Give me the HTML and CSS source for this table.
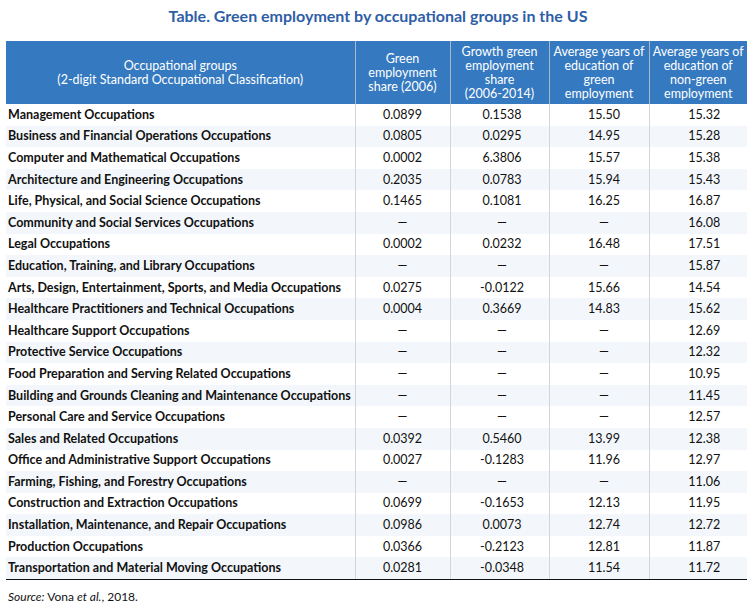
FILE: index.html
```html
<!DOCTYPE html>
<html>
<head>
<meta charset="utf-8">
<link rel="stylesheet" href="styles.css">
</head>
<body>
<div class="page">
  <h1 class="title">Table. Green employment by occupational groups in the US</h1>
  <table class="tbl">
    <colgroup>
      <col class="c1"><col class="c2"><col class="c3"><col class="c4"><col class="c5">
    </colgroup>
    <thead>
      <tr>
        <th>Occupational groups<br>(2-digit Standard Occupational Classification)</th>
        <th>Green<br>employment<br>share (2006)</th>
        <th>Growth green<br>employment<br>share<br>(2006-2014)</th>
        <th>Average years of<br>education of<br>green<br>employment</th>
        <th>Average years of<br>education of<br>non-green<br>employment</th>
      </tr>
    </thead>
    <tbody>
      <tr><td>Management Occupations</td><td>0.0899</td><td>0.1538</td><td>15.50</td><td>15.32</td></tr>
      <tr><td>Business and Financial Operations Occupations</td><td>0.0805</td><td>0.0295</td><td>14.95</td><td>15.28</td></tr>
      <tr><td>Computer and Mathematical Occupations</td><td>0.0002</td><td>6.3806</td><td>15.57</td><td>15.38</td></tr>
      <tr><td>Architecture and Engineering Occupations</td><td>0.2035</td><td>0.0783</td><td>15.94</td><td>15.43</td></tr>
      <tr><td>Life, Physical, and Social Science Occupations</td><td>0.1465</td><td>0.1081</td><td>16.25</td><td>16.87</td></tr>
      <tr><td>Community and Social Services Occupations</td><td>—</td><td>—</td><td>—</td><td>16.08</td></tr>
      <tr><td>Legal Occupations</td><td>0.0002</td><td>0.0232</td><td>16.48</td><td>17.51</td></tr>
      <tr><td>Education, Training, and Library Occupations</td><td>—</td><td>—</td><td>—</td><td>15.87</td></tr>
      <tr><td>Arts, Design, Entertainment, Sports, and Media Occupations</td><td>0.0275</td><td>-0.0122</td><td>15.66</td><td>14.54</td></tr>
      <tr><td>Healthcare Practitioners and Technical Occupations</td><td>0.0004</td><td>0.3669</td><td>14.83</td><td>15.62</td></tr>
      <tr><td>Healthcare Support Occupations</td><td>—</td><td>—</td><td>—</td><td>12.69</td></tr>
      <tr><td>Protective Service Occupations</td><td>—</td><td>—</td><td>—</td><td>12.32</td></tr>
      <tr><td>Food Preparation and Serving Related Occupations</td><td>—</td><td>—</td><td>—</td><td>10.95</td></tr>
      <tr><td>Building and Grounds Cleaning and Maintenance Occupations</td><td>—</td><td>—</td><td>—</td><td>11.45</td></tr>
      <tr><td>Personal Care and Service Occupations</td><td>—</td><td>—</td><td>—</td><td>12.57</td></tr>
      <tr><td>Sales and Related Occupations</td><td>0.0392</td><td>0.5460</td><td>13.99</td><td>12.38</td></tr>
      <tr><td>Office and Administrative Support Occupations</td><td>0.0027</td><td>-0.1283</td><td>11.96</td><td>12.97</td></tr>
      <tr><td>Farming, Fishing, and Forestry Occupations</td><td>—</td><td>—</td><td>—</td><td>11.06</td></tr>
      <tr><td>Construction and Extraction Occupations</td><td>0.0699</td><td>-0.1653</td><td>12.13</td><td>11.95</td></tr>
      <tr><td>Installation, Maintenance, and Repair Occupations</td><td>0.0986</td><td>0.0073</td><td>12.74</td><td>12.72</td></tr>
      <tr><td>Production Occupations</td><td>0.0366</td><td>-0.2123</td><td>12.81</td><td>11.87</td></tr>
      <tr><td>Transportation and Material Moving Occupations</td><td>0.0281</td><td>-0.0348</td><td>11.54</td><td>11.72</td></tr>
    </tbody>
  </table>
  <p class="source"><em>Source:</em> Vona <em>et al.</em>, 2018.</p>
</div>
</body>
</html>
```

FILE: styles.css
```css
html, body {
  margin: 0;
  padding: 0;
  background: #ffffff;
}
.page {
  width: 750px;
  font-family: "Lato", "Open Sans", sans-serif;
  color: #111;
}
.title {
  margin: 0;
  padding-top: 5px;
  height: 41px;
  box-sizing: border-box;
  text-align: center;
  font-size: 16px;
  line-height: 22px;
  font-weight: 700;
  color: #2e5ea6;
  padding-left: 6px;
}
.tbl {
  margin-left: 6px;
  width: 741px;
  border-collapse: collapse;
  table-layout: fixed;
  font-size: 12.5px;
}
.c1 { width: 349px; }
.c2 { width: 95px; }
.c3 { width: 99px; }
.c4 { width: 100px; }
.c5 { width: 98px; }
.tbl th {
  background: #3579c0;
  color: #fff;
  font-weight: 400;
  line-height: 14px;
  height: 63px;
  padding: 0;
  text-align: center;
  vertical-align: middle;
  border-left: 1px solid #a9b8c8;
}
.tbl th:first-child { border-left: none; }
.tbl td {
  height: 21.6px;
  padding: 0;
  text-align: center;
  border-left: 1px solid #d2d6da;
  line-height: 14px;
}
.tbl td:first-child {
  border-left: none;
  text-align: left;
  padding-left: 2px;
  font-weight: 700;
}
.tbl td:nth-child(3) { padding-left: 5px; }
.tbl td:nth-child(4) { padding-left: 10px; }
.tbl td:nth-child(5) { padding-left: 12px; }
.tbl tbody tr:nth-child(even) td { background: #f3f7fb; }
.tbl tbody tr:last-child td { border-bottom: 1.5px solid #111; }
.source {
  margin: 9px 0 0 8px;
  font-size: 12px;
}
```
